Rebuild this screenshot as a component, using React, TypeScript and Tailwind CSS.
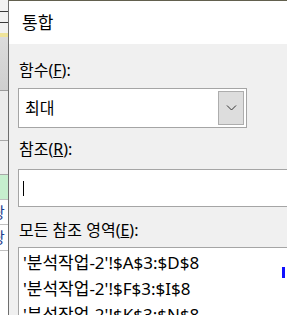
const font = { fontFamily: '"Noto Sans", "Noto Sans CJK KR", sans-serif' };

const SheetStrip = () => {
  return (
    <div className="flex w-[8px] shrink-0 flex-col overflow-hidden bg-[#f2f2f2]">
      <div className="h-[12px] shrink-0 border-b border-[#3a3a3a]" />
      <div className="h-[11px] shrink-0 border-b border-[#3a3a3a]" />
      <div className="h-[10px] shrink-0" />
      <div className="h-[4px] shrink-0 bg-[#efe49a]" />
      <div className="h-[54px] shrink-0 border-b border-[#9a9a9a] bg-gradient-to-b from-[#dcdcdc] to-[#cfcfcf]" />
      <div className="h-[50px] shrink-0 border-b border-[#a8a8a8] bg-[#ececec]" />
      <div className="h-[33px] shrink-0 bg-[#efefef]" />
      <div className="h-[25px] shrink-0 border-t border-[#a8a8a8] bg-[#c6efce]" />
      <div className="h-[25px] shrink-0 overflow-hidden border-t border-[#c0c0c0] bg-white text-[15px] leading-[24px] text-[#1f3f8f]">
        <span className="-ml-[9px] block">광</span>
      </div>
      <div className="h-[26px] shrink-0 overflow-hidden border-t border-[#c0c0c0] bg-white text-[15px] leading-[24px] text-[#1f3f8f]">
        <span className="-ml-[9px] block">광</span>
      </div>
      <div className="flex-1 border-t border-[#c0c0c0] bg-white" />
    </div>
  );
};

const Label = ({ text, k }: { text: string; k: string }) => (
  <p className="shrink-0 pl-[1px] text-[16px] leading-[22px] text-black">
    {text}(<u>{k}</u>):
  </p>
);

export default function App() {
  return (
    <div className="flex h-[315px] w-[287px] overflow-hidden bg-white" style={font}>
      <SheetStrip />
      <div className="relative flex min-w-0 flex-1 flex-col border-l border-t border-l-[#6e6e6e] border-t-[#62604e]">
        <div className="h-[43px] shrink-0 bg-white pl-[13px] pt-[10px] text-[17px] leading-[24px] text-black">통합</div>
        <div className="flex min-h-0 flex-1 flex-col overflow-hidden bg-[#f0f0f0] pl-[9px] pt-[15px]">
          <Label text="함수" k="F" />
          <div className="mt-[7px] flex h-[40px] w-[229px] shrink-0 items-center border border-[#a5a5a5] bg-white p-[2px]">
            <span className="flex-1 pl-[4px] text-[16px] text-black">최대</span>
            <div className="flex h-full w-[26px] items-center justify-center border border-[#adadad] bg-[#dddddd]">
              <svg width="11" height="6" viewBox="0 0 11 6">
                <path d="M1 0.5 L5.5 5 L10 0.5" fill="none" stroke="#333" strokeWidth="1" />
              </svg>
            </div>
          </div>
          <div className="mt-[10px] shrink-0">
            <Label text="참조" k="R" />
          </div>
          <div className="mt-[9px] flex h-[38px] shrink-0 items-center border border-r-0 border-[#a5a5a5] bg-white pl-[4px]">
            <div className="h-[15px] w-[1px] bg-black" />
          </div>
          <div className="mt-[12px] shrink-0">
            <Label text="모든 참조 영역" k="E" />
          </div>
          <div className="mt-[6px] min-h-0 flex-1 overflow-hidden border border-b-0 border-r-0 border-[#a5a5a5] bg-white pl-[4px] pt-[2px] text-[17px] leading-[26px] text-black">
            <p className="whitespace-nowrap">'분석작업-2'!$A$3:$D$8</p>
            <p className="whitespace-nowrap">'분석작업-2'!$F$3:$I$8</p>
            <p className="whitespace-nowrap">'분석작업-2'!$K$3:$N$8</p>
          </div>
        </div>
        <div className="absolute right-[2px] top-[266px] h-[11px] w-[3px] bg-[#1010ff]" />
      </div>
    </div>
  );
}
